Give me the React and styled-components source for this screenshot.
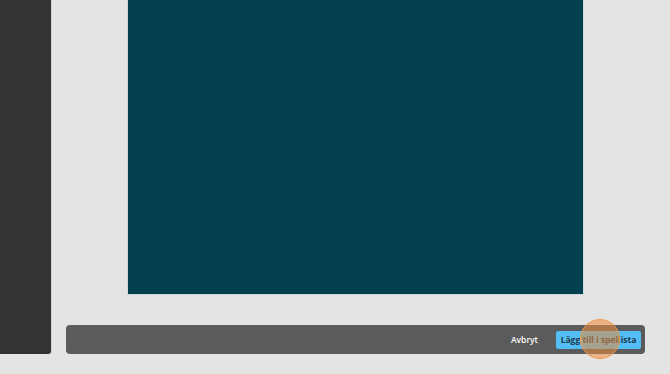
import React from "react";
import styled, { createGlobalStyle } from "styled-components";

const GlobalStyle = createGlobalStyle`
  html, body {
    margin: 0;
    padding: 0;
    background: #e4e4e4;
    font-family: "Open Sans", "Liberation Sans", sans-serif;
  }
`;

const Page = styled.div`
  width: 670px;
  height: 374px;
  display: flex;
  background: #e4e4e4;
  overflow: hidden;
`;

const Sidebar = styled.div`
  width: 51px;
  height: 354px;
  flex: none;
  background: #333333;
  border-bottom-right-radius: 3px;
  box-shadow: 1px 0 0 #cfcfcf;
`;

const Main = styled.div`
  flex: 1;
  display: flex;
  flex-direction: column;
  padding: 0 25px 0 15px;
`;

const Stage = styled.div`
  height: 325px;
  display: flex;
  justify-content: center;
`;

const Video = styled.div`
  width: 455px;
  height: 294px;
  background: #02404f;
  box-shadow: 0 0 0 1px #cfd9db;
`;

const Footer = styled.div`
  height: 29px;
  background: #5b5b5b;
  border-radius: 4px;
  display: flex;
  align-items: center;
  justify-content: flex-end;
  gap: 18px;
  padding-right: 4px;
`;

const TextButton = styled.button`
  background: none;
  border: none;
  padding: 0;
  color: #ffffff;
  font-family: inherit;
  font-weight: 600;
  font-size: 8.5px;
  cursor: pointer;
`;

const PrimaryButton = styled.button`
  position: relative;
  width: 85px;
  height: 18px;
  background: #53bdf5;
  border: none;
  border-radius: 2px;
  color: #1f3a4a;
  font-family: inherit;
  font-weight: 700;
  font-size: 8.5px;
  padding: 0;
  cursor: pointer;
`;

const Touch = styled.span`
  position: absolute;
  left: 24px;
  top: -12px;
  width: 40px;
  height: 40px;
  border-radius: 50%;
  background: rgba(236, 140, 60, 0.55);
  border: 1.5px solid #f39a4a;
  box-sizing: border-box;
  pointer-events: none;
`;

export default function App() {
  return (
    <>
      <GlobalStyle />
      <Page>
        <Sidebar />
        <Main>
          <Stage>
            <Video />
          </Stage>
          <Footer>
            <TextButton>Avbryt</TextButton>
            <PrimaryButton>
              Lägg till i spellista
              <Touch />
            </PrimaryButton>
          </Footer>
        </Main>
      </Page>
    </>
  );
}
